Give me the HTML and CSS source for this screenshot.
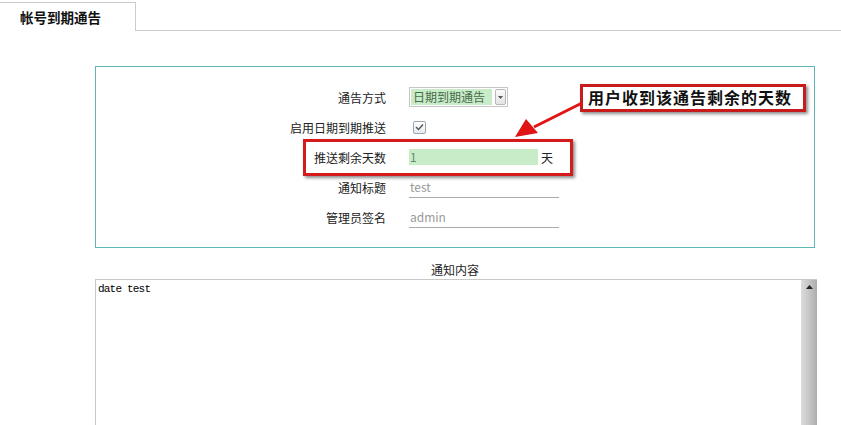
FILE: index.html
```html
<!DOCTYPE html>
<html lang="zh-CN">
<head>
  <meta charset="UTF-8">
  <title>帐号到期通告</title>
  <link rel="stylesheet" href="styles.css">
</head>
<body>
  <div class="page">

    <!-- 标签栏 -->
    <div class="tabs">
      <div class="tab">帐号到期通告</div>
      <div class="tab-rest"></div>
    </div>

    <!-- 设置面板 -->
    <div class="panel">
      <div class="form">
        <label>通告方式</label>
        <div class="field">
          <span class="select">
            <span class="select-value">日期到期通告</span>
            <span class="select-btn">
              <svg width="5" height="3" viewBox="0 0 5 3"><path d="M0 0h5L2.5 3z" fill="#555"/></svg>
            </span>
          </span>
        </div>

        <label>启用日期到期推送</label>
        <div class="field">
          <span class="check">
            <svg width="9" height="8" viewBox="0 0 9 8"><path d="M1 4l2.5 2.5L8 1.5" fill="none" stroke="#555" stroke-width="1.4"/></svg>
          </span>
        </div>

        <label>推送剩余天数</label>
        <div class="field">
          <span class="days">1</span><span class="unit">天</span>
        </div>

        <label>通知标题</label>
        <div class="field"><span class="line-input">test</span></div>

        <label>管理员签名</label>
        <div class="field"><span class="line-input">admin</span></div>
      </div>
    </div>

    <div class="content-title">通知内容</div>
    <div class="textbox">
      <div class="text">date test</div>
      <div class="scroll">
        <svg width="7" height="4" viewBox="0 0 7 4"><path d="M0 4h7L3.5 0z" fill="#222"/></svg>
      </div>
    </div>

    <!-- 标注 -->
    <div class="mark"></div>
    <div class="callout">用户收到该通告剩余的天数</div>
    <svg class="arrow" width="90" height="60" viewBox="0 0 90 60">
      <line x1="82" y1="22" x2="34" y2="46" stroke="#e01414" stroke-width="3"/>
      <polygon points="15,56 26,38 38,52" fill="#e01414"/>
    </svg>

  </div>
</body>
</html>
```

FILE: styles.css
```css
body {
  margin: 0;
  background: #fff;
  font-family: "Noto Sans CJK SC", "Liberation Sans", sans-serif;
  font-size: 12px;
  color: #222;
}

.page {
  position: relative;
  height: 425px;
  overflow: hidden;
}

.tabs {
  display: flex;
  margin-top: 2px;
}

.tab {
  width: 136px;
  height: 29px;
  border-top: 1px solid #ccc;
  border-right: 1px solid #ccc;
  box-sizing: border-box;
  padding-left: 20px;
  line-height: 29px;
  font-size: 13.5px;
  font-weight: bold;
  color: #111;
}

.tab-rest {
  flex: 1;
  border-bottom: 1px solid #ccc;
}

.panel {
  width: 720px;
  margin: 35px 0 0 95px;
  border: 1px solid #5fb6b4;
  box-sizing: border-box;
  padding: 15px 0;
}

.form {
  display: grid;
  grid-template-columns: 290px 1fr;
  grid-auto-rows: 30px;
  column-gap: 23px;
  align-items: center;
}

.form label {
  text-align: right;
  color: #222;
}

.field {
  display: flex;
  align-items: center;
}

.select {
  display: flex;
  align-items: center;
  height: 20px;
  width: 99px;
  border: 1px solid #c6c6c6;
  box-sizing: border-box;
  padding: 1px;
}

.select-value {
  width: 82px;
  height: 16px;
  line-height: 16px;
  background: #c8ecc8;
  color: #4a6a4a;
  padding-left: 2px;
  box-sizing: border-box;
}

.select-btn {
  margin-left: 3px;
  width: 11px;
  height: 16px;
  border: 1px solid #b8b8b8;
  border-radius: 2px;
  box-sizing: border-box;
  background: linear-gradient(#fafafa, #e4e4e4);
  display: flex;
  align-items: center;
  justify-content: center;
}

.check {
  margin-left: 4px;
  width: 13px;
  height: 13px;
  border: 1px solid #9aa6b2;
  border-radius: 2px;
  box-sizing: border-box;
  background: linear-gradient(#fff, #e6e9ee);
  display: flex;
  align-items: center;
  justify-content: center;
}

.days {
  width: 129px;
  height: 16px;
  line-height: 16px;
  background: #c8ecc8;
  color: #6a8a6a;
  padding-left: 1px;
  box-sizing: border-box;
}

.unit {
  margin-left: 3px;
  color: #222;
}

.line-input {
  width: 150px;
  height: 20px;
  line-height: 18px;
  border-bottom: 1px solid #aaa;
  color: #999;
  padding-left: 1px;
  box-sizing: border-box;
  margin-top: 1px;
}

.content-title {
  width: 720px;
  margin: 12px 0 0 95px;
  line-height: 19px;
  text-align: center;
}

.textbox {
  display: flex;
  width: 722px;
  height: 200px;
  margin-left: 95px;
  border: 1px solid #c8c8c8;
  border-right: none;
  box-sizing: border-box;
}

.text {
  flex: 1;
  padding: 3px 2px;
  font-family: "Liberation Mono", monospace;
  font-size: 11px;
  letter-spacing: -0.8px;
  color: #000;
}

.scroll {
  width: 16px;
  background: linear-gradient(to right, #dcdcdc, #c6c6c6 50%, #adadad);
  display: flex;
  justify-content: center;
  padding-top: 5px;
  box-sizing: border-box;
}

/* 标注层 */
.mark {
  position: absolute;
  left: 303px;
  top: 139px;
  width: 270px;
  height: 37px;
  border: 3px solid #d41a1a;
  box-sizing: border-box;
  box-shadow: 2px 2px 3px rgba(0, 0, 0, 0.45);
}

.callout {
  position: absolute;
  left: 580px;
  top: 84px;
  width: 226px;
  height: 28px;
  border: 3px solid #c81c1c;
  box-sizing: border-box;
  background: #fff;
  box-shadow: 2px 2px 3px rgba(0, 0, 0, 0.45);
  padding-left: 5px;
  line-height: 21px;
  font-size: 16px;
  font-weight: bold;
  letter-spacing: 1px;
  color: #111;
}

.arrow {
  position: absolute;
  left: 500px;
  top: 81px;
}
```
